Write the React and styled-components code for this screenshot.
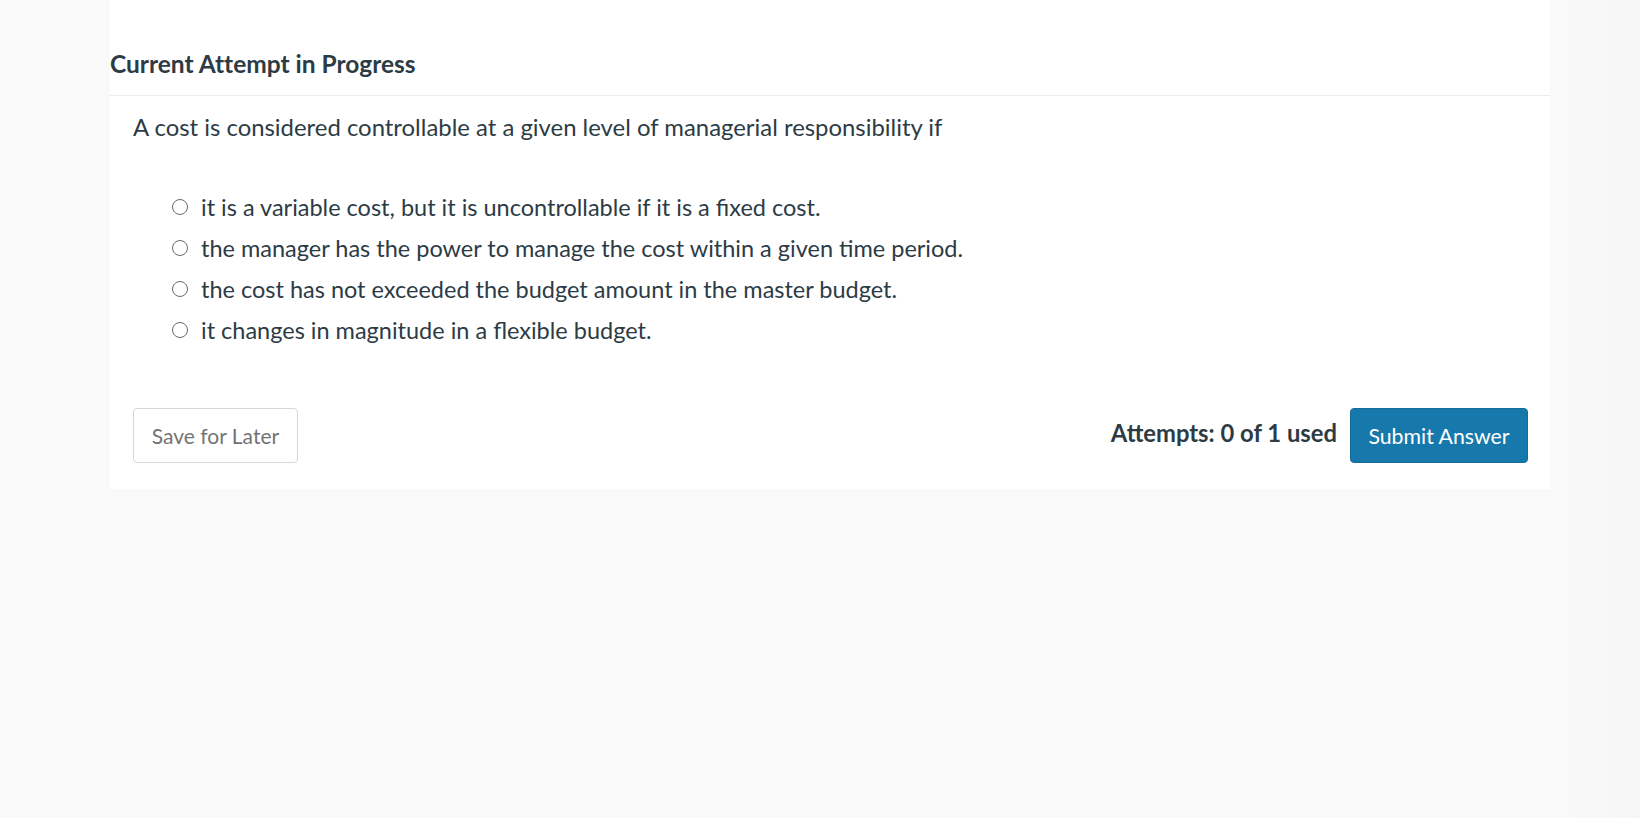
import React from 'react';
import styled, {createGlobalStyle} from "styled-components";

const GlobalStyle = createGlobalStyle`
  html, body {
    margin: 0;
    padding: 0;
    background: #f9f9f9;
    font-family: Lato, "Liberation Sans", sans-serif;
    color: #2d3b45;
  }
`

const Page = styled.div`
  min-height: 818px;
  padding-left: 110px;
  background: linear-gradient(to right, #f9f9f9 0, #f9f9f9 1560px, #f6f6f6 1640px);
`

const Panel = styled.div`
  width: 1440px;
  background: #fff;
`

const Header = styled.div`
  padding: 50px 0 17px;
  border-bottom: 1px solid #ebedee;
`

const Title = styled.h2`
  margin: 0;
  font-size: 24.5px;
  line-height: 28px;
  font-weight: 700;
  font-variant-ligatures: no-common-ligatures;
`

const Body = styled.div`
  padding: 15px 22px 26px 23px;
`

const Question = styled.p`
  margin: 0;
  font-size: 23.9px;
  line-height: 32px;
`

const Options = styled.ul`
  list-style: none;
  margin: 43px 0 0;
  padding: 0 0 0 39px;
`

const Option = styled.li`
  display: flex;
  align-items: center;
  gap: 13px;
  height: 41px;
  font-size: 23.5px;
`

const Radio = styled.span`
  box-sizing: border-box;
  width: 16px;
  height: 16px;
  border: 1.5px solid #6a6a6a;
  border-radius: 50%;
  flex-shrink: 0;
  background: #fff;
`

const Actions = styled.div`
  display: flex;
  align-items: center;
  justify-content: space-between;
  margin-top: 58px;
`

const SaveButton = styled.button`
  height: 55px;
  width: 165px;
  padding: 0;
  background: #fff;
  border: 1px solid #d5d8da;
  border-radius: 4px;
  color: #737373;
  font-family: inherit;
  font-size: 21px;
`

const Right = styled.div`
  display: flex;
  align-items: center;
  gap: 13px;
`

const Attempts = styled.span`
  font-size: 23.8px;
  font-weight: 700;
  margin-top: -5px;
`

const SubmitButton = styled.button`
  height: 55px;
  width: 178px;
  padding: 0;
  background: #1779ab;
  border: 1px solid #146c99;
  border-radius: 4px;
  color: #fff;
  font-family: inherit;
  font-size: 21.3px;
`

const choices = [
    "it is a variable cost, but it is uncontrollable if it is a fixed cost.",
    "the manager has the power to manage the cost within a given time period.",
    "the cost has not exceeded the budget amount in the master budget.",
    "it changes in magnitude in a flexible budget.",
]

const App = () => {
    return (
        <>
            <GlobalStyle/>
            <Page>
                <Panel>
                    <Header>
                        <Title>Current Attempt in Progress</Title>
                    </Header>
                    <Body>
                        <Question>A cost is considered controllable at a given level of managerial responsibility if</Question>
                        <Options>
                            {choices.map(c => (
                                <Option key={c}>
                                    <Radio/>
                                    <span>{c}</span>
                                </Option>
                            ))}
                        </Options>
                        <Actions>
                            <SaveButton>Save for Later</SaveButton>
                            <Right>
                                <Attempts>Attempts: 0 of 1 used</Attempts>
                                <SubmitButton>Submit Answer</SubmitButton>
                            </Right>
                        </Actions>
                    </Body>
                </Panel>
            </Page>
        </>
    );
};

export default App;
